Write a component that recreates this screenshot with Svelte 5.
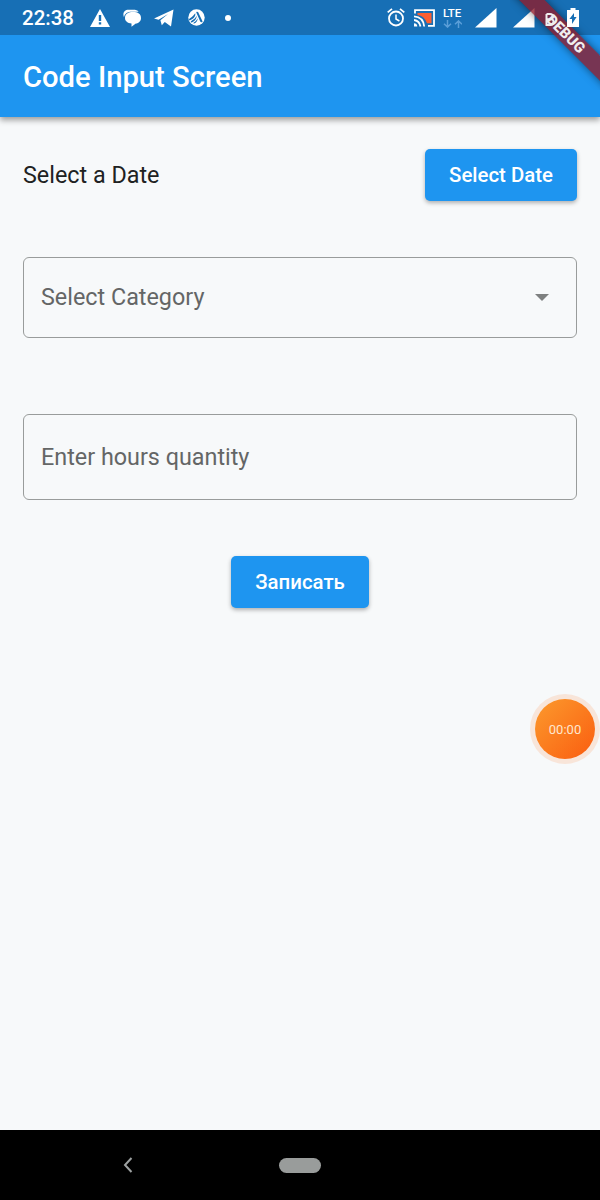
<script>
  let category = 'Select Category';
</script>

<div class="screen">
  <header>
    <div class="status">
      <time>22:38</time>
      <div class="notifications">
        <svg width="20" height="18" viewBox="0 0 20 18"><path fill="#fff" fill-rule="evenodd" d="M10 0 20 18H0ZM8.8 6v6h2.4V6Zm0 7.3v2.2h2.4v-2.2Z"/></svg>
        <svg width="18" height="18" viewBox="0 0 18 18"><path fill="#fff" d="M1 8.2C-.8 4 1.5 .7 5.5 .7H10c2.8 0 4.6.5 5.6 2H9C4.5 2.7 1.7 4.5 1 8.2Z"/><path fill="#fff" d="M10 3.1c4.9 0 8 2 8 5.8 0 3.2-2.2 5.2-5.2 5.6L8.5 17.8v-3.4C4.7 14 2 12.2 2 8.9c0-3.8 3.3-5.8 8-5.8Z"/></svg>
        <svg width="20" height="18" viewBox="0 0 20 18"><path fill="#fff" d="M0 9.4 19.5 .4 17 17.5 10.8 13 7.8 16.2 6.4 11.2 14 5 4.6 10.8Z"/></svg>
        <svg class="disc" width="17" height="17" viewBox="0 0 17 17"><circle cx="8.5" cy="8.5" r="8.2" fill="#fff"/><g fill="#176fb5"><path d="M8.2 3.2c1.5-1 2.2.2 2.7 1.6l3.6 7.4c.3 1.2-1.5 1.6-2.3.4Z"/><path d="M7.2 4.2C8 6.8 5.8 9.8 1.6 11.4c-1.2-.6-.4-1.7.4-2.2C4.8 7.7 5.8 6 7.2 4.2Z"/><path d="M8.5 6.8C9 9.4 7 12 3.6 13.6c-1.3-.2-.9-1.3 0-1.8C6.5 10.3 7.6 8.8 8.5 6.8Z"/><path d="M9.5 9.2c.5 2-1 4.4-3.4 5.4-1 0-.8-.9 0-1.4 1.8-1.1 2.8-2.3 3.4-4Z"/></g></svg>
        <i class="dot"></i>
      </div>
      <div class="system">
        <svg class="alarm" width="18" height="19" viewBox="0 0 18 19"><g fill="none" stroke="#fff"><circle cx="9" cy="10.5" r="7" stroke-width="1.8"/><path stroke-width="1.8" d="M.7 4.4 5 .9M17.3 4.4 13 .9"/><path stroke-width="1.5" d="M9 6.5v4.5l3.4 2"/></g></svg>
        <svg class="cast" width="21" height="18" viewBox="0 0 21 18"><path fill="#fa5f32" d="M3.5 4h14v10.2H13Q10 6.5 3.5 6Z"/><g fill="none" stroke="#fff" stroke-width="1.8"><path d="M1 4.5V1.2h19v15.6h-6M0 7.4Q9.2 8 10.2 17.5M0 11q5.5.8 6.5 6.5"/></g><path fill="#fff" d="M0 14.2q3 0 3.3 3.3H0Z"/></svg>
        <div class="network"><span>LTE</span><svg width="19" height="8" viewBox="0 0 19 8"><g fill="none" stroke="#5a9ed8" stroke-width="1.5"><path d="M4.5 0v7M1 3.8l3.5 3.3L8 3.8M15.5 8V1M12 4.2 15.5.9 19 4.2"/></g></svg></div>
        <svg class="signal" width="22" height="20" viewBox="0 0 22 20"><path fill="#fff" d="M21.5 0v19.5H0Z"/></svg>
        <svg class="signal second" width="22" height="20" viewBox="0 0 22 20"><path fill="#fff" d="M21.5 0v19.5H0Z"/></svg>
        <svg class="roaming" width="10" height="13" viewBox="0 0 10 13"><path fill="none" stroke="#eee" stroke-width="2" d="M1.5 1v11H5.5Q8.5 12 8.5 9T5.5 6.3H1.5M1.5 1H5Q8 1 8 3.7T5 6.3"/></svg>
        <svg class="battery" width="12" height="19" viewBox="0 0 12 19"><path fill="#fff" d="M3.5 0h5v2H12v17H0V2h3.5Z"/><path fill="#176fb5" d="M7 5v4h2.6L5 16v-5H2.4Z"/></svg>
      </div>
    </div>
    <h1>Code Input Screen</h1>
    <div class="ribbon"><b>DEBUG</b></div>
  </header>

  <main>
    <div class="date-row">
      <span>Select a Date</span>
      <button class="date">Select Date</button>
    </div>
    <div class="field select">
      <span>{category}</span>
      <svg width="14" height="7" viewBox="0 0 14 7"><path fill="#7e8080" d="M0 0h14L7 7Z"/></svg>
    </div>
    <div class="field hours"><span>Enter hours quantity</span></div>
    <button class="submit">Записать</button>
    <div class="timer"><span>00:00</span></div>
  </main>

  <nav>
    <svg width="10" height="16" viewBox="0 0 10 16"><path fill="none" stroke="#9da1a1" stroke-width="2" d="M8.5 1 2 8l6.5 7"/></svg>
    <i class="pill"></i>
  </nav>
</div>

<style>
  :global(body) { margin: 0; }
  .screen { position: relative; display: flex; flex-direction: column; width: 600px; height: 1200px; overflow: hidden; background: #f7f9fa; font-family: Roboto, sans-serif; }
  svg { display: block; flex: none; }
  header { position: relative; z-index: 1; flex: none; height: 117px; background: #1e95f0; box-shadow: 0 3px 6px rgba(0,0,0,.38); }
  .status { display: flex; align-items: center; height: 35px; box-sizing: border-box; padding: 0 21px 0 22px; background: #176fb5; color: #fff; }
  time { width: 68px; font-size: 20.5px; font-weight: 500; line-height: 35px; padding-top: 2px; }
  .notifications { display: flex; align-items: center; }
  .notifications svg:nth-child(2) { margin-left: 13px; }
  .notifications svg:nth-child(3) { margin-left: 13px; }
  .notifications .disc { margin-left: 14px; }
  .dot { width: 6px; height: 6px; margin-left: 20px; border-radius: 50%; background: #fff; }
  .system { display: flex; align-items: center; margin-left: auto; }
  .cast { margin-left: 9px; }
  .network { width: 20px; margin-left: 8px; font-size: 11.5px; line-height: 10px; font-weight: 500; }
  .network span { display: block; margin-bottom: 2px; }
  .signal { margin-left: 12px; }
  .second { margin-left: 16px; }
  .roaming { position: relative; z-index: 2; margin: 3px 0 0 10px; }
  .battery { position: relative; z-index: 2; margin-left: 12px; }
  h1 { margin: 0; padding-left: 23px; font-size: 29.2px; line-height: 84px; font-weight: 500; color: #fff; }
  .ribbon { position: absolute; top: 0; right: 0; width: 90px; height: 90px; overflow: hidden; }
  .ribbon b { position: absolute; left: -24px; top: 25px; width: 160px; height: 17.5px; font-size: 14.8px; line-height: 18px; font-weight: 900; text-align: center; color: #f0edef; background: rgba(145,25,38,.78); transform: rotate(45deg); box-shadow: 0 0 8px rgba(0,0,0,.5); }
  main { position: relative; flex: 1; display: flex; flex-direction: column; padding: 32px 23px 0; }
  .date-row { display: flex; justify-content: space-between; align-items: center; height: 52px; font-size: 23.35px; color: #202222; }
  button { height: 52px; padding: 0; border: 0; border-radius: 5px; background: #1e95f0; color: #fff; font: 500 20.4px Roboto, sans-serif; box-shadow: 0 2px 4px rgba(0,0,0,.3); }
  .date { width: 152px; }
  .field { display: flex; align-items: center; justify-content: space-between; box-sizing: border-box; border: 1.5px solid #999c9b; border-radius: 6px; padding: 0 27px 0 17px; font-size: 23.35px; color: #646666; }
  .field span { padding-bottom: 1px; }
  .select { height: 81px; margin-top: 56px; }
  .hours { height: 86px; margin-top: 76px; }
  .submit { width: 138px; margin: 56px auto 0; }
  .timer { position: absolute; right: 0; top: 582px; width: 60px; height: 60px; margin-right: 5px; display: grid; place-items: center; border-radius: 50%; background: linear-gradient(135deg,#fc9a2d,#fa5d10); box-shadow: 0 0 0 5px #f8e5d9; color: #ffe7cf; font-size: 13px; }
  nav { flex: none; display: flex; align-items: center; height: 70px; padding-left: 123px; background: #000; }
  .pill { width: 42px; height: 15px; margin-left: 146px; border-radius: 8px; background: #999c9b; }
</style>
